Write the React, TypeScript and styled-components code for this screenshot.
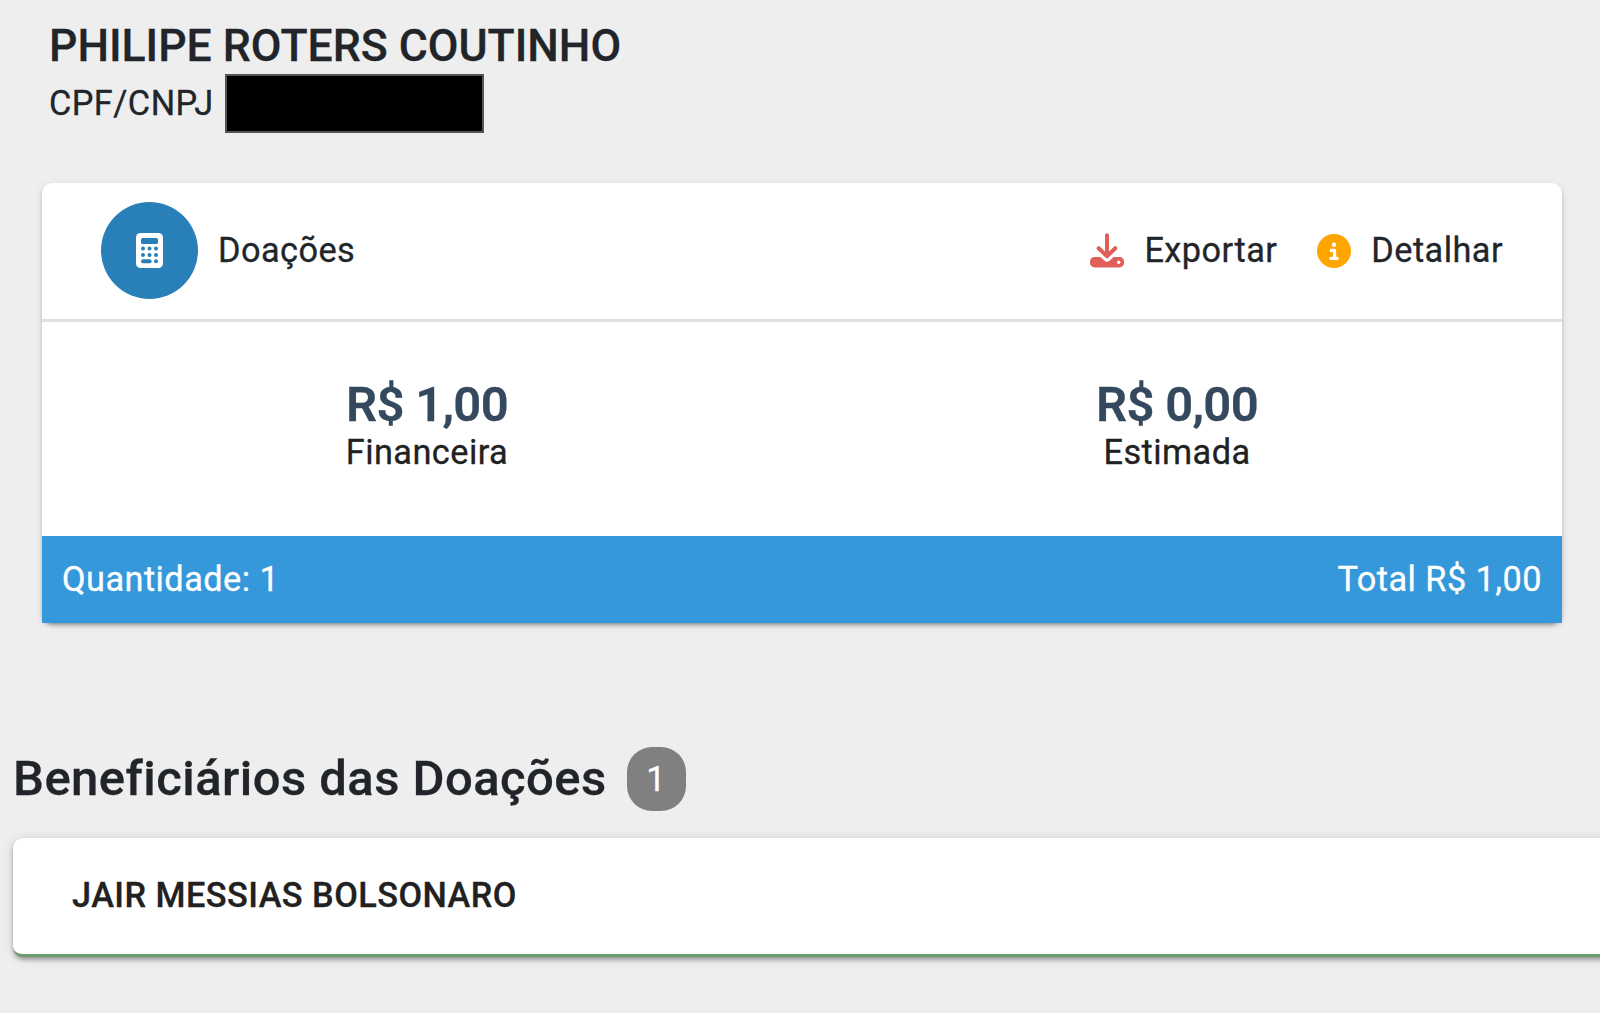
import React from "react";
import styled, { createGlobalStyle } from "styled-components";

const GlobalStyle = createGlobalStyle`
  * {
    box-sizing: border-box;
  }

  body {
    margin: 0;
    background: #eeeeee;
    color: #212529;
    font-family: Roboto, "Liberation Sans", sans-serif;
    font-size: 34.3px;
    letter-spacing: 0.45px;
    -webkit-text-stroke: 0.3px;
  }

  h1, h2, h3, p {
    margin: 0;
    white-space: nowrap;
  }
`;

const donor = {
  name: "PHILIPE ROTERS COUTINHO",
};

const amounts = [
  { label: "Financeira", value: "R$ 1,00" },
  { label: "Estimada", value: "R$ 0,00" },
];

const beneficiaries = [{ name: "JAIR MESSIAS BOLSONARO" }];

function CalculatorIcon() {
  return (
    <svg width="27" height="35" viewBox="0 0 27 35">
      <rect width="27" height="35" rx="4.6" fill="#fff" />
      <g fill="#2980b9">
        <rect x="5" y="5" width="17" height="6" rx="1.6" />
        <circle cx="7" cy="15.6" r="2" />
        <circle cx="13.5" cy="15.6" r="2" />
        <circle cx="20" cy="15.6" r="2" />
        <circle cx="7" cy="22" r="2" />
        <circle cx="13.5" cy="22" r="2" />
        <circle cx="20" cy="22" r="2" />
        <rect x="5" y="26.2" width="10.6" height="4" rx="2" />
        <circle cx="20" cy="28.2" r="2" />
      </g>
    </svg>
  );
}

function DownloadIcon() {
  return (
    <svg width="34" height="35" viewBox="0 0 34 35">
      <path
        d="M4.4 24H10.4l3.8 3.4a4.2 4.2 0 0 0 5.6 0l3.8-3.4h6a4.4 4.4 0 0 1 4.4 4.4v1.600a4.400 4.400 0 0 1-4.400 4.400H4.400A4.400 4.400 0 0 1 0 30v-1.600a4.400 4.400 0 0 1 4.400-4.400z"
        fill="#e05f58"
      />
      <path
        d="M17 2.200v21M8.700 15.200l8.300 8 8.300-8"
        fill="none"
        stroke="#e05f58"
        strokeWidth="4"
        strokeLinecap="round"
        strokeLinejoin="round"
      />
      <circle cx="28.700" cy="29.200" r="1.700" fill="#fff" />
    </svg>
  );
}

function InfoIcon() {
  return (
    <svg width="34" height="34" viewBox="0 0 34 34">
      <circle cx="17" cy="17" r="17" fill="#ffa500" />
      <circle cx="17" cy="10.7" r="2.2" fill="#fff" />
      <path
        d="M14.2 16.4H17.6V24.2M13.8 24.4H20.2"
        fill="none"
        stroke="#fff"
        strokeWidth="3.2"
        strokeLinecap="round"
        strokeLinejoin="round"
      />
    </svg>
  );
}

function App() {
  return (
    <Page>
      <GlobalStyle />
      <DonorHeader>
        <DonorName>{donor.name}</DonorName>
        <DonorDocument>
          <span>CPF/CNPJ</span>
          <Redacted />
        </DonorDocument>
      </DonorHeader>

      <DonationCard>
        <CardHeader>
          <IconCircle>
            <CalculatorIcon />
          </IconCircle>
          <CardTitle>Doações</CardTitle>
          <Action>
            <DownloadIcon />
            <span>Exportar</span>
          </Action>
          <Action>
            <InfoIcon />
            <span>Detalhar</span>
          </Action>
        </CardHeader>
        <CardBody>
          {amounts.map((amount) => (
            <Amount key={amount.label}>
              <h3>{amount.value}</h3>
              <p>{amount.label}</p>
            </Amount>
          ))}
        </CardBody>
        <CardFooter>
          <span>Quantidade: 1</span>
          <span>Total R$ 1,00</span>
        </CardFooter>
      </DonationCard>

      <SectionTitle>
        <h2>Beneficiários das Doações</h2>
        <Badge>{beneficiaries.length}</Badge>
      </SectionTitle>
      {beneficiaries.map((beneficiary) => (
        <BeneficiaryCard key={beneficiary.name}>
          {beneficiary.name}
        </BeneficiaryCard>
      ))}
    </Page>
  );
}

const Page = styled.main`
  min-height: 100vh;
  overflow: hidden;
`;

const DonorHeader = styled.header`
  height: 183px;
  padding: 18px 0 0 49px;
`;

const DonorName = styled.h1`
  font-size: 44.5px;
  font-weight: 500;
  line-height: 56px;
  letter-spacing: 0;
`;

const DonorDocument = styled.div`
  display: flex;
  align-items: center;
  justify-content: space-between;
  width: 435px;
  height: 59px;

  span {
    padding-bottom: 2px;
  }
`;

const Redacted = styled.div`
  width: 259px;
  height: 59px;
  border: 2px solid #555;
  background: #000;
`;

const DonationCard = styled.section`
  width: 1520px;
  margin-left: 42px;
  border-radius: 10px;
  background: #fff;
  box-shadow: 0 3px 5px -2px rgba(0, 0, 0, 0.5), 0 2px 10px rgba(0, 0, 0, 0.08);
`;

const CardHeader = styled.div`
  display: flex;
  align-items: center;
  height: 139px;
  padding: 0 59px 1px;
  border-bottom: 3px solid #e0e0e0;
`;

const IconCircle = styled.div`
  display: flex;
  align-items: center;
  justify-content: center;
  width: 97px;
  height: 97px;
  border-radius: 50%;
  background: #2980b9;
`;

const CardTitle = styled.h2`
  flex: 1;
  margin-left: 20px;
  padding-bottom: 1px;
  font-size: inherit;
  font-weight: 400;
`;

const Action = styled.div`
  display: flex;
  align-items: center;
  gap: 20px;

  span {
    padding-bottom: 1px;
  }

  & + & {
    margin-left: 40px;
  }
`;

const CardBody = styled.div`
  display: grid;
  grid-template-columns: 1fr 1fr;
  height: 214px;
  padding: 54px 10px 0;
`;

const Amount = styled.div`
  text-align: center;

  h3 {
    color: #34495e;
    font-size: 49px;
    font-weight: 600;
    line-height: 57px;
    letter-spacing: -0.7px;
  }

  p {
    line-height: 38px;
    color: #212121;
  }
`;

const CardFooter = styled.div`
  display: flex;
  align-items: center;
  justify-content: space-between;
  height: 87px;
  padding: 0 20px 2px;
  background: #3498db;
  color: #fff;
`;

const SectionTitle = styled.div`
  display: flex;
  align-items: center;
  gap: 20px;
  height: 64px;
  margin: 124px 0 27px 13px;

  h2 {
    padding-bottom: 2px;
    font-size: 49px;
    font-weight: 500;
  }
`;

const Badge = styled.span`
  display: flex;
  align-items: center;
  justify-content: center;
  width: 59px;
  height: 64px;
  border-radius: 25px;
  background: #808080;
  color: #fff;
`;

const BeneficiaryCard = styled.div`
  display: flex;
  align-items: center;
  height: 119px;
  margin: 0 -20px 0 13px;
  padding: 0 0 2px 59px;
  border-bottom: 3px solid #6b9a6b;
  border-radius: 10px;
  background: #fff;
  color: #212121;
  font-weight: 500;
  box-shadow: 0 3px 5px -1px rgba(0, 0, 0, 0.4), 0 1px 12px rgba(0, 0, 0, 0.12);
`;

export default App;
